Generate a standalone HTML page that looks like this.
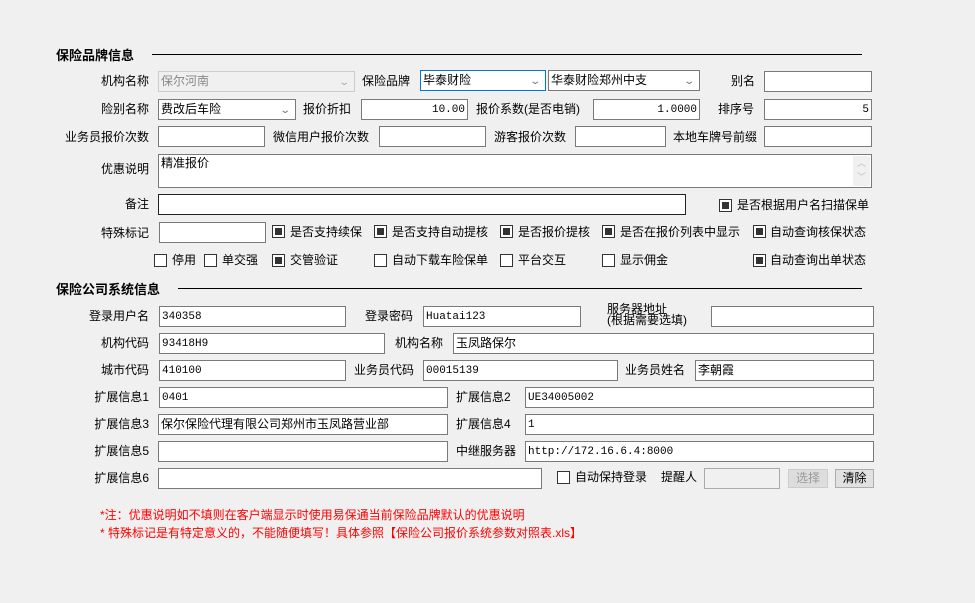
<!DOCTYPE html>
<html><head><meta charset="utf-8"><style>
*{margin:0;padding:0;box-sizing:border-box}
body{width:975px;height:603px;background:#f0f0f0;position:relative;overflow:hidden;font-family:"Liberation Sans","Noto Sans CJK SC","WenQuanYi Zen Hei",sans-serif;font-size:12px;color:#000}
.a{position:absolute;white-space:nowrap;line-height:14px}
.r{text-align:right}
.i{position:absolute;background:#fff;border:1px solid #7a7a7a;height:21px;padding:0 2px;line-height:19px;white-space:nowrap;overflow:hidden}
.m{font-family:"Liberation Mono","Noto Sans CJK SC",monospace;font-size:11px;padding-top:2px;line-height:17px}
.h{position:absolute;font-weight:bold;font-size:13px;line-height:15px}
.ln{position:absolute;height:1px;background:#000}
.cb{position:absolute;width:13px;height:13px;border:1px solid #333;background:#fff}
.cb.c::after{content:"";position:absolute;left:2px;top:2px;width:7px;height:7px;background:#333}
.ar{position:absolute;right:6px;top:1px;color:#777;font-size:10px;transform:scaleX(1.4)}
.btn{position:absolute;border:1px solid #adadad;background:#e1e1e1;height:19px;text-align:center;line-height:17px}
.red{position:absolute;color:#f00;white-space:nowrap;line-height:14px}
</style></head><body>
<div class="h" style="left:56px;top:48px">保险品牌信息</div>
<div class="ln" style="left:152px;top:54px;width:710px"></div>

<div class="a r" style="left:60px;width:89px;top:74px">机构名称</div>
<div class="i" style="left:158px;top:71px;width:197px;border-color:#ccc;background:#f0f0f0;color:#888">保尔河南<span class="ar" style="color:#aaa">⌄</span></div>
<div class="a" style="left:362px;top:74px">保险品牌</div>
<div class="i" style="left:420px;top:70px;width:126px;border-color:#0078d7">毕泰财险<span class="ar">⌄</span></div>
<div class="i" style="left:548px;top:70px;width:152px">华泰财险郑州中支<span class="ar">⌄</span></div>
<div class="a" style="left:731px;top:74px">别名</div>
<div class="i" style="left:764px;top:71px;width:108px"></div>

<div class="a r" style="left:60px;width:89px;top:102px">险别名称</div>
<div class="i" style="left:158px;top:99px;width:138px">费改后车险<span class="ar">⌄</span></div>
<div class="a" style="left:303px;top:102px">报价折扣</div>
<div class="i m r" style="left:361px;top:99px;width:107px">10.00</div>
<div class="a" style="left:476px;top:102px">报价系数(是否电销)</div>
<div class="i m r" style="left:593px;top:99px;width:107px">1.0000</div>
<div class="a" style="left:718px;top:102px">排序号</div>
<div class="i m r" style="left:764px;top:99px;width:108px">5</div>

<div class="a r" style="left:40px;width:109px;top:130px">业务员报价次数</div>
<div class="i" style="left:158px;top:126px;width:107px"></div>
<div class="a" style="left:273px;top:130px">微信用户报价次数</div>
<div class="i" style="left:379px;top:126px;width:107px"></div>
<div class="a" style="left:494px;top:130px">游客报价次数</div>
<div class="i" style="left:575px;top:126px;width:91px"></div>
<div class="a" style="left:673px;top:130px">本地车牌号前缀</div>
<div class="i" style="left:764px;top:126px;width:108px"></div>

<div class="a r" style="left:60px;width:89px;top:162px">优惠说明</div>
<div class="i" style="left:158px;top:154px;width:714px;height:34px;line-height:14px;padding-top:1px">精准报价<div style="position:absolute;right:1px;top:1px;width:17px;height:30px;background:#f0f0f0;color:#bbb;font-size:9px;text-align:center;line-height:14px">︿<br>﹀</div></div>

<div class="a r" style="left:60px;width:89px;top:197px">备注</div>
<div class="i" style="left:158px;top:194px;width:528px;border-color:#222"></div>
<div class="cb c" style="left:719px;top:199px"></div><div class="a" style="left:737px;top:198px">是否根据用户名扫描保单</div>

<div class="a r" style="left:60px;width:89px;top:226px">特殊标记</div>
<div class="i" style="left:159px;top:222px;width:107px"></div>
<div class="cb c" style="left:272px;top:225px"></div><div class="a" style="left:290px;top:225px">是否支持续保</div>
<div class="cb c" style="left:374px;top:225px"></div><div class="a" style="left:392px;top:225px">是否支持自动提核</div>
<div class="cb c" style="left:500px;top:225px"></div><div class="a" style="left:518px;top:225px">是否报价提核</div>
<div class="cb c" style="left:602px;top:225px"></div><div class="a" style="left:620px;top:225px">是否在报价列表中显示</div>
<div class="cb c" style="left:753px;top:225px"></div><div class="a" style="left:770px;top:225px">自动查询核保状态</div>

<div class="cb" style="left:154px;top:254px"></div><div class="a" style="left:172px;top:253px">停用</div>
<div class="cb" style="left:204px;top:254px"></div><div class="a" style="left:222px;top:253px">单交强</div>
<div class="cb c" style="left:272px;top:254px"></div><div class="a" style="left:290px;top:253px">交管验证</div>
<div class="cb" style="left:374px;top:254px"></div><div class="a" style="left:392px;top:253px">自动下载车险保单</div>
<div class="cb" style="left:500px;top:254px"></div><div class="a" style="left:518px;top:253px">平台交互</div>
<div class="cb" style="left:602px;top:254px"></div><div class="a" style="left:620px;top:253px">显示佣金</div>
<div class="cb c" style="left:753px;top:254px"></div><div class="a" style="left:770px;top:253px">自动查询出单状态</div>

<div class="h" style="left:56px;top:282px">保险公司系统信息</div>
<div class="ln" style="left:178px;top:288px;width:684px"></div>

<div class="a r" style="left:60px;width:89px;top:309px">登录用户名</div>
<div class="i m" style="left:159px;top:306px;width:187px">340358</div>
<div class="a" style="left:365px;top:309px">登录密码</div>
<div class="i m" style="left:423px;top:306px;width:158px">Huatai123</div>
<div class="a" style="left:607px;top:304px;line-height:11px">服务器地址<br>(根据需要选填)</div>
<div class="i" style="left:711px;top:306px;width:163px"></div>

<div class="a r" style="left:60px;width:89px;top:336px">机构代码</div>
<div class="i m" style="left:159px;top:333px;width:226px">93418H9</div>
<div class="a" style="left:395px;top:336px">机构名称</div>
<div class="i" style="left:453px;top:333px;width:421px">玉凤路保尔</div>

<div class="a r" style="left:60px;width:89px;top:363px">城市代码</div>
<div class="i m" style="left:159px;top:360px;width:187px">410100</div>
<div class="a" style="left:354px;top:363px">业务员代码</div>
<div class="i m" style="left:423px;top:360px;width:195px">00015139</div>
<div class="a" style="left:625px;top:363px">业务员姓名</div>
<div class="i" style="left:695px;top:360px;width:179px">李朝霞</div>

<div class="a r" style="left:60px;width:89px;top:390px">扩展信息1</div>
<div class="i m" style="left:159px;top:387px;width:289px">0401</div>
<div class="a" style="left:456px;top:390px">扩展信息2</div>
<div class="i m" style="left:525px;top:387px;width:349px">UE34005002</div>

<div class="a r" style="left:60px;width:89px;top:417px">扩展信息3</div>
<div class="i" style="left:158px;top:414px;width:290px">保尔保险代理有限公司郑州市玉凤路营业部</div>
<div class="a" style="left:456px;top:417px">扩展信息4</div>
<div class="i m" style="left:525px;top:414px;width:349px">1</div>

<div class="a r" style="left:60px;width:89px;top:444px">扩展信息5</div>
<div class="i" style="left:158px;top:441px;width:290px"></div>
<div class="a" style="left:456px;top:444px">中继服务器</div>
<div class="i m" style="left:525px;top:441px;width:349px">http://172.16.6.4:8000</div>

<div class="a r" style="left:60px;width:89px;top:471px">扩展信息6</div>
<div class="i" style="left:158px;top:468px;width:384px"></div>
<div class="cb" style="left:557px;top:471px"></div><div class="a" style="left:575px;top:470px">自动保持登录</div>
<div class="a" style="left:661px;top:470px">提醒人</div>
<div class="i" style="left:704px;top:468px;width:76px;background:#f0f0f0;border-color:#aaa"></div>
<div class="btn" style="left:788px;top:469px;width:40px;color:#999;background:#ddd;border-color:#ccc">选择</div>
<div class="btn" style="left:835px;top:469px;width:39px">清除</div>

<div class="red" style="left:100px;top:508px">*注：优惠说明如不填则在客户端显示时使用易保通当前保险品牌默认的优惠说明</div>
<div class="red" style="left:100px;top:526px">* 特殊标记是有特定意义的，不能随便填写！具体参照【保险公司报价系统参数对照表.xls】</div>
</body></html>
